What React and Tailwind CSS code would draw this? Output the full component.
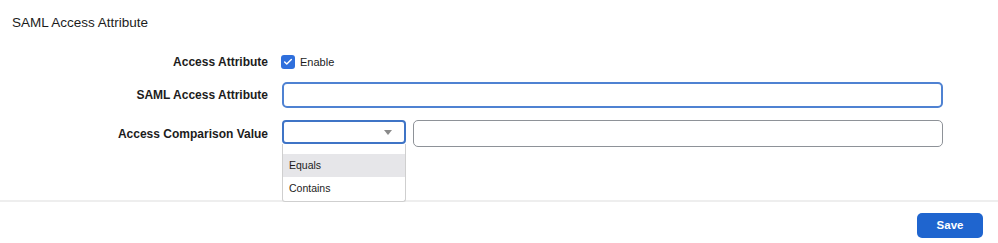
import { Check } from "lucide-react";

const SaveFooter = () => (
  <div className="flex justify-end border-t-2 border-[#eeeeee] pr-[15px] pt-[11px]">
    <button className="h-[25px] w-[66px] rounded-[5px] bg-[#1f65cf] text-[11.5px] font-bold text-white">
      Save
    </button>
  </div>
);

export default function App() {
  return (
    <div className="h-[243px] w-[998px] overflow-hidden bg-white font-['Liberation_Sans',Arial,sans-serif] text-[#1c1c1c]">
      <div className="h-[200px]">
        {/* Header */}
        <h2 className="pl-3 pt-[14px] text-[13.5px] leading-[17px]">SAML Access Attribute</h2>

        {/* Form */}
        <div className="mt-[20px] grid grid-cols-[268px_1fr] gap-x-[13px] pr-[55px]">
          <div className="flex h-[22px] items-center justify-end text-[12px] font-bold">Access Attribute</div>
          <div className="flex h-[22px] items-center gap-[5px]">
            <span className="flex h-[14px] w-[14px] items-center justify-center rounded-[3px] bg-[#2f6fdc]">
              <Check size={10} strokeWidth={3.5} className="text-white" />
            </span>
            <span className="text-[11px]">Enable</span>
          </div>

          <div className="mt-[9px] flex h-[26px] items-center justify-end text-[12px] font-bold">
            SAML Access Attribute
          </div>
          <div className="ml-px mt-[9px] h-[26px] rounded-[5px] border-2 border-[#4f82d2]" />

          <div className="mt-[12px] flex h-[27px] items-center justify-end text-[12px] font-bold">
            Access Comparison Value
          </div>
          <div className="ml-px mt-[12px] flex h-[27px] gap-[7px]">
            <div className="relative h-[24px] w-[124px] shrink-0">
              <div className="flex h-full items-center justify-end rounded-[4px] border-2 border-[#3f74c6] pr-[12px]">
                <span className="h-0 w-0 border-x-[4px] border-t-[5px] border-x-transparent border-t-[#8a8a8a]" />
              </div>
              {/* Open menu */}
              <div className="absolute left-0 top-full z-10 w-[124px] rounded-b-[3px] border border-t-0 border-[#cfcfcf] bg-white pb-px pt-[10px] text-[10.5px]">
                <div className="flex h-[23px] items-center bg-[#e6e6e9] pl-[6px]">Equals</div>
                <div className="flex h-[23px] items-center pl-[6px]">Contains</div>
              </div>
            </div>
            <div className="h-[27px] flex-1 rounded-[5px] border-[1.5px] border-[#8e9298]" />
          </div>
        </div>
      </div>

      <SaveFooter />
    </div>
  );
}
